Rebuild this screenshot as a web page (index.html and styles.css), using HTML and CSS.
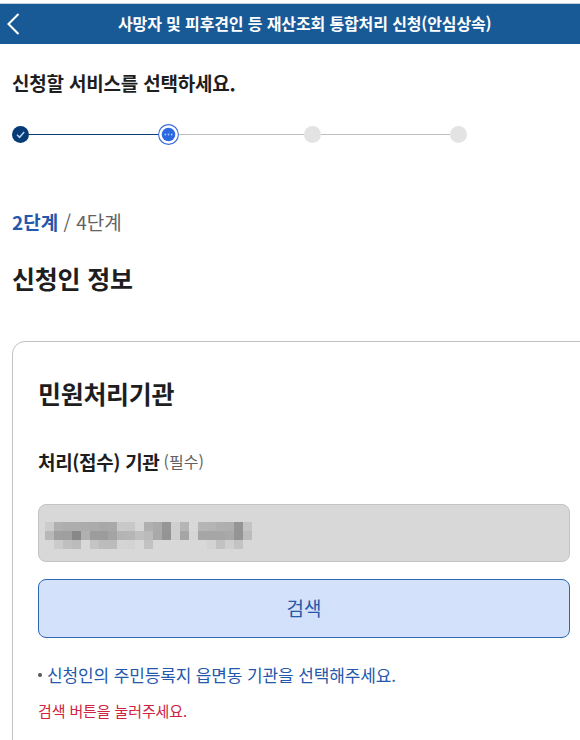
FILE: index.html
```
<!DOCTYPE html>
<html lang="ko">
<head>
<meta charset="utf-8">
<title>사망자 및 피후견인 등 재산조회 통합처리 신청(안심상속)</title>
<link rel="stylesheet" href="styles.css">
</head>
<body>
<header class="topbar">
  <svg class="back" width="14" height="22" viewBox="0 0 14 22"><path d="M11.5 1 1.5 11l10 10" fill="none" stroke="#fff" stroke-width="2.1"/></svg>
  <h1 class="topbar-title">사망자 및 피후견인 등 재산조회 통합처리 신청(안심상속)</h1>
</header>
<main class="page">
  <p class="prompt">신청할 서비스를 선택하세요.</p>
  <div class="stepper">
    <svg class="dot" width="17" height="17" viewBox="0 0 17 17"><circle cx="8.5" cy="8.5" r="8.5" fill="#063b75"/><path d="m5 8.7 2.6 2.6 4.6-5.4" fill="none" stroke="#b9d3f3" stroke-width="1.5"/></svg>
    <span class="line line-done"></span>
    <svg class="dot" width="21" height="21" viewBox="0 0 21 21"><circle cx="10.5" cy="10.5" r="9.9" fill="#fff" stroke="#3c6ddb" stroke-width="1.1"/><circle cx="10.5" cy="10.5" r="6.8" fill="#2c68e2"/><g fill="#a9c6fa"><circle cx="7.3" cy="10.5" r=".9"/><circle cx="10.5" cy="10.5" r=".9"/><circle cx="13.7" cy="10.5" r=".9"/></g></svg>
    <span class="line"></span>
    <span class="dot dot-todo"></span>
    <span class="line line-last"></span>
    <span class="dot dot-todo"></span>
  </div>
  <p class="count"><strong>2단계</strong> / 4단계</p>
  <h2 class="section-title">신청인 정보</h2>
  <section class="card">
    <h3 class="card-title">민원처리기관</h3>
    <p class="label"><strong>처리(접수) 기관</strong><span class="required">(필수)</span></p>
    <div class="field"><svg id="mosaic" width="207" height="27" shape-rendering="crispEdges"></svg></div>
    <button class="search" type="button">검색</button>
    <p class="hint">신청인의 주민등록지 읍면동 기관을 선택해주세요.</p>
    <p class="error">검색 버튼을 눌러주세요.</p>
  </section>
</main>
<script src="mosaic.js"></script>
</body>
</html>
```
FILE: styles.css
```
* { box-sizing: border-box; }
body {
  margin: 0;
  height: 740px;
  overflow: hidden;
  background: #fff;
  color: #1e1e1e;
  font-family: "Noto Sans CJK KR", sans-serif;
}
h1, h2, h3, p { margin: 0; }
.topbar {
  display: flex;
  align-items: center;
  height: 44px;
  padding: 4px 0 0 7px;
  background: linear-gradient(#fff 3px, #c3cfdd 3px, #c3cfdd 4px, #185a96 4px);
}
.back { flex: none; }
.topbar-title {
  margin: -1px 0 1px 97px;
  color: #fff;
  font-size: 16px;
  line-height: 24px;
  letter-spacing: -0.13px;
  white-space: nowrap;
}
.page { padding: 24px 0 0 12px; }
.prompt { font-size: 19px; font-weight: 700; line-height: 30px; letter-spacing: -0.2px; }
.stepper {
  display: flex;
  align-items: center;
  width: 455px;
  height: 21px;
  margin-top: 26px;
}
.dot { flex: none; }
.dot-todo { width: 17px; height: 17px; border-radius: 50%; background: #e3e3e3; }
.line { flex: 0 0 125px; height: 1px; background: #bfbfbf; }
.line-done { flex-basis: 129px; background: #0b3e70; }
.line-last { flex-basis: 129px; }
.count { margin-top: 62px; font-size: 19px; line-height: 30px; color: #626262; }
.count strong { color: #2458aa; }
.section-title { margin-top: 21px; font-size: 25px; line-height: 40px; letter-spacing: -0.2px; }
.card {
  width: 584px;
  height: 420px;
  margin-top: 43px;
  padding: 31px 25px 0;
  border: 1px solid #c2c2c2;
  border-radius: 13px;
}
.card-title { font-size: 25px; line-height: 40px; letter-spacing: -0.3px; }
.label {
  display: flex;
  align-items: center;
  height: 30px;
  margin-top: 33px;
  font-size: 19px;
  letter-spacing: -0.35px;
}
.required { margin-left: 4px; font-size: 16px; letter-spacing: 0.1px; color: #626262; }
.field {
  display: flex;
  width: 532px;
  height: 58px;
  margin-top: 28px;
  padding: 17px 6px;
  border: 1px solid #c4c4c4;
  border-radius: 8px;
  background: #d8d8d8;
}
.search {
  display: block;
  width: 532px;
  height: 59px;
  margin-top: 17px;
  padding: 0 0 2px;
  border: 1px solid #2e67b4;
  border-radius: 8px;
  background: #d3e1fa;
  color: #2458aa;
  font: 19px/28px "Noto Sans CJK KR", sans-serif;
}
.hint {
  display: flex;
  align-items: center;
  gap: 5px;
  margin-top: 24px;
  font-size: 17px;
  line-height: 26px;
  letter-spacing: -0.13px;
  color: #2458aa;
}
.hint::before { content: ""; width: 4px; height: 4px; border-radius: 50%; background: #555; }
.error { margin-top: 11px; font-size: 15px; line-height: 24px; letter-spacing: -0.12px; color: #cf2340; }
```
FILE: mosaic.js
```
// Masked institution name: two hex digits of grey per 9px cell.
const rows = [
  "ccb0adadacaba8a9c9c8d6b0aa96cfb5d8b6b4b0ae95c4",
  "b8a09f88b09c9ca4b4b6bfbba994cfa5d5a6a6a6a994bc",
  "d8cbbfbbd8c4bcbbd4d3d8c2d8d8d8d8d8d8d3c2cfc3d8"
];
const svg = document.getElementById("mosaic");
rows.forEach((row, y) => {
  row.match(/../g).forEach((grey, x) => {
    const cell = document.createElementNS("http://www.w3.org/2000/svg", "rect");
    cell.setAttribute("x", x * 9);
    cell.setAttribute("y", y * 9);
    cell.setAttribute("width", 9);
    cell.setAttribute("height", 9);
    cell.setAttribute("fill", "#" + grey + grey + grey);
    svg.append(cell);
  });
});
```
